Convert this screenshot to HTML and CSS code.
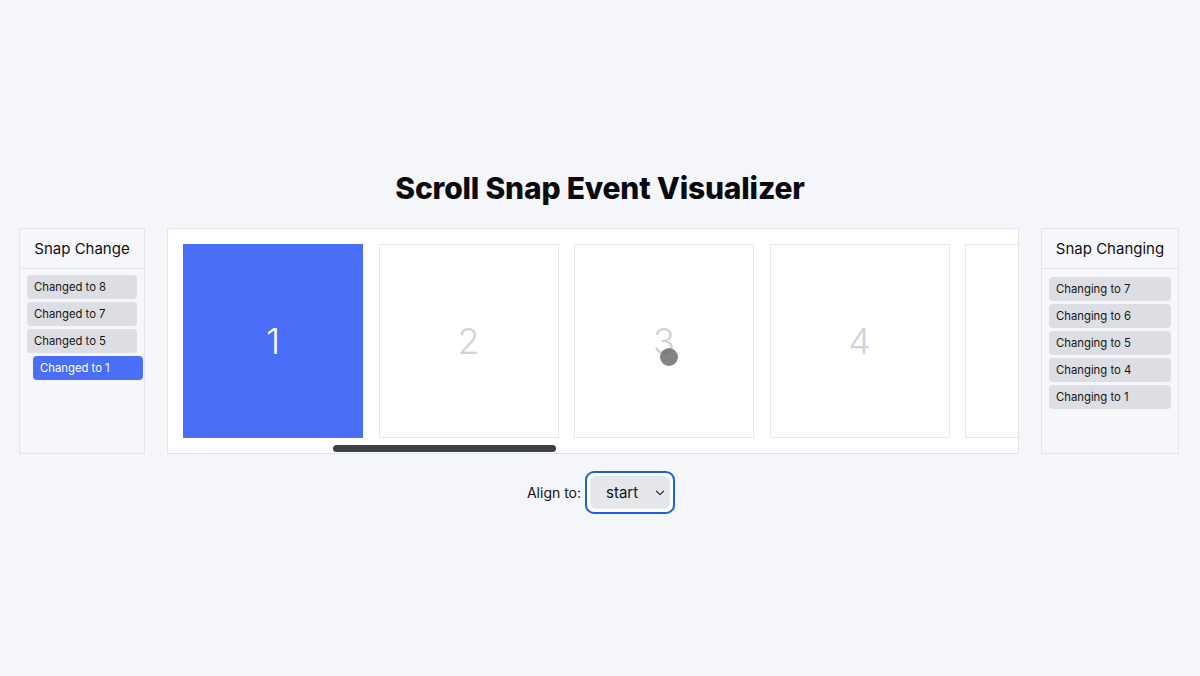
FILE: index.html
```html
<!DOCTYPE html>
<html lang="en">
<head>
<meta charset="utf-8">
<title>Scroll Snap Event Visualizer</title>
<link rel="stylesheet" href="styles.css">
</head>
<body>
<main class="page">
  <h1 class="title">Scroll Snap Event Visualizer</h1>
  <div class="stage">
    <section class="log log-left">
      <h2 class="log-head">Snap Change</h2>
      <ul class="log-list">
        <li class="pill">Changed to 8</li>
        <li class="pill">Changed to 7</li>
        <li class="pill">Changed to 5</li>
        <li class="pill pill-active">Changed to 1</li>
      </ul>
    </section>
    <div class="scroller-wrap">
      <div class="scroller">
        <div class="card card-active">1</div>
        <div class="card">2</div>
        <div class="card">3</div>
        <div class="card">4</div>
        <div class="card"></div>
      </div>
      <div class="scrollbar"></div>
      <div class="touch-dot"></div>
    </div>
    <section class="log log-right">
      <h2 class="log-head">Snap Changing</h2>
      <ul class="log-list">
        <li class="pill">Changing to 7</li>
        <li class="pill">Changing to 6</li>
        <li class="pill">Changing to 5</li>
        <li class="pill">Changing to 4</li>
        <li class="pill">Changing to 1</li>
      </ul>
    </section>
  </div>
  <div class="controls">
    <label class="align-label" for="align">Align to:</label>
    <div class="select-wrap">
      <select id="align" class="align-select">
        <option>start</option>
        <option>center</option>
        <option>end</option>
      </select>
      <svg class="chev" width="10" height="6" viewBox="0 0 10 6"><path d="M1.5 1.2 L5 4.6 L8.5 1.2" fill="none" stroke="#333" stroke-width="1.3" stroke-linecap="round" stroke-linejoin="round"/></svg>
    </div>
  </div>
</main>
</body>
</html>
```

FILE: styles.css
```css
* { box-sizing: border-box; }
html, body { margin: 0; padding: 0; }
body {
  background: #f5f6fa;
  font-family: Inter, "Liberation Sans", sans-serif;
  color: #111;
  width: 1200px;
  height: 676px;
  overflow: hidden;
}
.page {
  display: flex;
  flex-direction: column;
  align-items: center;
  padding-top: 170px;
}
.title {
  margin: 0;
  font-size: 30px;
  line-height: 36px;
  font-weight: 800;
  letter-spacing: -0.2px;
  color: #0b0b0f;
}
.stage {
  margin-top: 22px;
  width: 100%;
  display: flex;
  gap: 22px;
  padding: 0 21px 0 19px;
  height: 226px;
}
.log {
  flex: none;
  border: 1px solid #e3e5e9;
  background: #f6f7fa;
  display: flex;
  flex-direction: column;
}
.log-left { width: 126px; }
.log-right { width: 138px; }
.log-head {
  margin: 0;
  height: 40px;
  border-bottom: 1px solid #e3e5e9;
  font-size: 15px;
  font-weight: 400;
  display: flex;
  align-items: center;
  justify-content: center;
  color: #111;
  padding-bottom: 1px;
}
.log-list {
  list-style: none;
  margin: 0;
  padding: 6px 7px;
  display: flex;
  flex-direction: column;
  gap: 3px;
}
.log-right .log-list { padding-top: 8px; }
.pill {
  height: 24px;
  display: flex;
  align-items: center;
  padding: 0 7px;
  background: #dcdee3;
  border-radius: 4px;
  font-size: 11.3px;
  color: #161616;
}
.pill-active {
  background: #4b6ef8;
  color: #fff;
  transform: translateX(6px);
}
.scroller-wrap {
  flex: 1;
  position: relative;
  border: 1px solid #e3e5e9;
  background: #fff;
  overflow: hidden;
}
.scroller {
  display: flex;
  gap: 15.5px;
  padding: 15px;
  overflow: hidden;
  height: 100%;
}
.card {
  flex: none;
  width: 180px;
  height: 194px;
  border: 1px solid #e5e7eb;
  display: flex;
  align-items: center;
  justify-content: center;
  font-size: 36px;
  font-weight: 300;
  color: #cfd3da;
}
.card-active {
  background: #4b6ef8;
  border-color: #4b6ef8;
  color: #fff;
}
.scrollbar {
  position: absolute;
  left: 165px;
  width: 223px;
  top: 216px;
  height: 7px;
  border-radius: 4px;
  background: #3d4046;
}
.touch-dot {
  position: absolute;
  left: 492px;
  top: 119px;
  width: 18px;
  height: 18px;
  border-radius: 50%;
  background: rgba(105, 105, 105, 0.82);
}
.controls {
  margin-top: 17px;
  display: flex;
  align-items: center;
  gap: 4px;
  padding-left: 2px;
}
.align-label {
  font-size: 14px;
  color: #111;
}
.select-wrap {
  position: relative;
  border: 2px solid #1d63d6;
  border-radius: 9px;
  padding: 3px;
  background: #fff;
}
.align-select {
  appearance: none;
  -webkit-appearance: none;
  display: block;
  width: 80px;
  height: 33px;
  border: none;
  border-radius: 6px;
  background: #e6e7eb;
  font-family: Inter, "Liberation Sans", sans-serif;
  font-size: 15px;
  color: #111;
  padding: 0 0 0 16px;
  outline: none;
}
.chev {
  position: absolute;
  right: 8px;
  top: 17px;
  pointer-events: none;
}
```
